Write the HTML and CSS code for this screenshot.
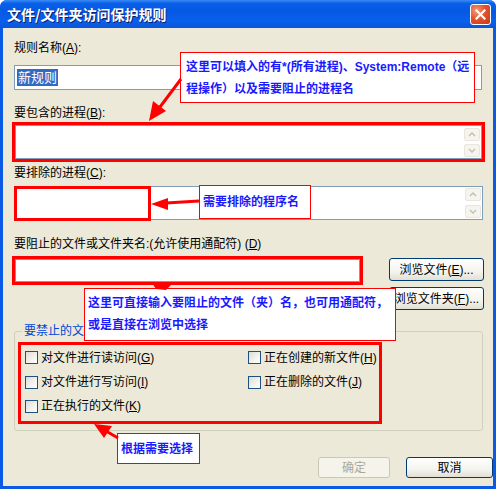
FILE: index.html
```html
<!DOCTYPE html>
<html lang="zh-CN">
<head>
<meta charset="utf-8">
<title>文件/文件夹访问保护规则</title>
<link rel="stylesheet" href="styles.css">
</head>
<body>
<div class="window">
  <div class="titlebar">
    <span class="title">文件/文件夹访问保护规则</span>
    <span class="close">
      <svg width="11" height="11" viewBox="0 0 11 11"><path d="M1.5 1.5 L9.5 9.5 M9.5 1.5 L1.5 9.5" stroke="#fff" stroke-width="2.2" stroke-linecap="square"/></svg>
    </span>
  </div>
  <div class="client">
    <div class="label">规则名称(<u>A</u>):</div>
    <div class="field input-a"><span class="sel">新规则</span></div>

    <div class="label lb">要包含的进程(<u>B</u>):</div>
    <div class="redbox rb-b">
      <div class="field ta-b">
        <div class="spin">
          <span class="sbtn"><svg width="8" height="5" viewBox="0 0 8 5"><path d="M1 4 L4 1 L7 4" fill="none" stroke="#c5c2b2" stroke-width="1.5"/></svg></span>
          <span class="sbtn"><svg width="8" height="5" viewBox="0 0 8 5"><path d="M1 1 L4 4 L7 1" fill="none" stroke="#c5c2b2" stroke-width="1.5"/></svg></span>
        </div>
      </div>
    </div>

    <div class="label lc">要排除的进程(<u>C</u>):</div>
    <div class="field ta-c">
      <div class="redmark"></div>
      <div class="spin spin-c">
        <span class="sbtn"><svg width="8" height="5" viewBox="0 0 8 5"><path d="M1 4 L4 1 L7 4" fill="none" stroke="#c5c2b2" stroke-width="1.5"/></svg></span>
        <span class="sbtn"><svg width="8" height="5" viewBox="0 0 8 5"><path d="M1 1 L4 4 L7 1" fill="none" stroke="#c5c2b2" stroke-width="1.5"/></svg></span>
      </div>
    </div>

    <div class="label ld">要阻止的文件或文件夹名:(允许使用通配符) (<u>D</u>)</div>
    <div class="row-d">
      <div class="redbox rb-d"><div class="field input-d"></div></div>
      <div class="browse">
        <span class="btn"><span>浏览文件(<u>E</u>)...</span></span>
        <span class="btn"><span>浏览文件夹(<u>F</u>)...</span></span>
      </div>
    </div>

    <fieldset class="group">
      <legend>要禁止的文件操作</legend>
      <div class="redbox rb-checks">
        <div class="checks">
          <div class="chk"><span class="box"></span><span>对文件进行读访问(<u>G</u>)</span></div>
          <div class="chk"><span class="box"></span><span>正在创建的新文件(<u>H</u>)</span></div>
          <div class="chk"><span class="box"></span><span>对文件进行写访问(<u>I</u>)</span></div>
          <div class="chk"><span class="box"></span><span>正在删除的文件(<u>J</u>)</span></div>
          <div class="chk"><span class="box"></span><span>正在执行的文件(<u>K</u>)</span></div>
        </div>
      </div>
    </fieldset>

    <div class="actions">
      <span class="btn btn-ok">确定</span>
      <span class="btn btn-cancel">取消</span>
    </div>
  </div>

  <div class="note note1">这里可以填入的有*(所有进程)、System:Remote（远<br>程操作）以及需要阻止的进程名</div>
  <div class="note note2">需要排除的程序名</div>
  <div class="note note3">这里可直接输入要阻止的文件（夹）名，也可用通配符，<br>或是直接在浏览中选择</div>
  <div class="note note4">根据需要选择</div>

  <svg class="arrows" width="496" height="489" viewBox="0 0 496 489">
    <g fill="#ff0000" stroke="#ff0000">
      <line x1="181" y1="79" x2="160" y2="107" stroke-width="3"/>
      <polygon points="149,121 153,101 166,111" stroke="none"/>
      <line x1="199" y1="201" x2="166" y2="203" stroke-width="3"/>
      <polygon points="151,204 168,198 168,210" stroke="none"/>
      <polygon points="152,283 171,285 166,290 156,289" stroke="none"/>
      <line x1="118" y1="438" x2="106" y2="431" stroke-width="3"/>
      <polygon points="94,424 112,426 104,438" stroke="none"/>
    </g>
  </svg>
</div>
</body>
</html>
```

FILE: styles.css
```css
* { box-sizing: border-box; }

html, body {
  margin: 0;
  padding: 0;
  background: #ffffff;
}

body {
  font-family: "Liberation Sans", "Noto Sans CJK SC", sans-serif;
  font-size: 12px;
  color: #000;
}

u { text-decoration: underline; text-underline-offset: 1px; }

.window {
  position: relative;
  width: 496px;
  height: 489px;
  background: #0a5ae6;
  border-radius: 7px 7px 0 0;
  overflow: hidden;
}

.titlebar {
  height: 28px;
  display: flex;
  align-items: center;
  justify-content: space-between;
  padding: 0 5px 0 7px;
  background: linear-gradient(to bottom, #3b8cf6 0%, #0a5fe8 12%, #0458e4 40%, #0a60ec 75%, #0b55d8 100%);
}

.title {
  color: #ffffff;
  font-family: "Noto Sans CJK SC", sans-serif;
  font-weight: bold;
  font-size: 14px;
  line-height: 16px;
  text-shadow: 1px 1px 0 #0a1e6e;
}

.close {
  width: 21px;
  height: 21px;
  border: 1px solid #ffffff;
  border-radius: 3px;
  background: radial-gradient(circle at 30% 30%, #f59a7c 0%, #e2532f 45%, #c23a18 100%);
  display: flex;
  align-items: center;
  justify-content: center;
}

.client {
  margin: 0 3px 3px 3px;
  height: 458px;
  background: #ece9d8;
  padding: 13px 0 0 11px;
}

.label {
  line-height: 14px;
  height: 14px;
  white-space: nowrap;
}

.lb { margin-top: 16px; }
.lc { margin-top: 4px; }
.ld { margin-top: 17px; }

.field {
  position: relative;
  background: #ffffff;
  border: 1px solid #7f9db9;
}

.input-a {
  margin-top: 10px;
  width: 468px;
  height: 25px;
  padding: 3px 0 0 2px;
}

.sel {
  display: inline-block;
  background: #316ac5;
  color: #ffffff;
  font-size: 13px;
  line-height: 17px;
  padding: 0 1px;
}

.redbox {
  border: 3px solid #ff0000;
}

.rb-b {
  margin: 2px 0 0 -2px;
  width: 473px;
  height: 40px;
}

.ta-b {
  width: 100%;
  height: 100%;
}

.spin {
  position: absolute;
  right: 1px;
  top: 2px;
  display: flex;
  flex-direction: column;
  gap: 3px;
}

.spin-c { top: 1px; gap: 4px; }

.sbtn {
  width: 16px;
  height: 13px;
  background: #f5f4ef;
  border: 1px solid #e9e7dd;
  border-radius: 2px;
  display: flex;
  align-items: center;
  justify-content: center;
}

.ta-c {
  margin-top: 6px;
  width: 469px;
  height: 34px;
}

.redmark {
  position: absolute;
  left: -1px;
  top: -1px;
  width: 137px;
  height: 35px;
  border: 3px solid #ff0000;
}

.row-d {
  margin-top: 5px;
  display: flex;
  align-items: flex-start;
}

.rb-d {
  margin-left: -2px;
  width: 351px;
  height: 29px;
}

.input-d {
  width: 100%;
  height: 100%;
}

.browse {
  margin: 2px 0 0 26px;
  display: flex;
  flex-direction: column;
  gap: 6px;
}

.btn {
  display: flex;
  align-items: center;
  justify-content: center;
  height: 23px;
  border: 1px solid #003c74;
  border-radius: 3px;
  background: linear-gradient(to bottom, #ffffff 0%, #f4f3ee 60%, #e2e0d4 100%);
  white-space: nowrap;
  line-height: 14px;
}

.browse .btn { width: 95px; }

.group {
  margin: 14px 0 0 0;
  width: 469px;
  padding: 0 0 6px 3px;
  border: 1px solid #d0d0bf;
  border-radius: 3px;
}

.group legend {
  color: #0046d5;
  line-height: 14px;
  padding: 0 2px;
  margin-left: 4px;
}

.rb-checks {
  margin-top: 4px;
  width: 364px;
  height: 82px;
  padding: 0 0 0 4px;
}

.checks {
  display: grid;
  grid-template-columns: 223px 1fr;
  grid-template-rows: 25px 24px 24px;
}

.chk {
  display: flex;
  align-items: center;
  gap: 3px;
  white-space: nowrap;
  line-height: 14px;
}

.box {
  width: 13px;
  height: 13px;
  border: 1px solid #1c5180;
  background: linear-gradient(135deg, #dcdbd5 0%, #f4f3ee 60%, #ffffff 100%);
  flex: none;
}

.actions {
  margin-top: 26px;
  width: 479px;
  display: flex;
  justify-content: flex-end;
  gap: 16px;
}

.actions .btn { height: 21px; }

.btn-ok {
  width: 72px;
  color: #aca899;
  border-color: #c9c7ba;
  background: #f5f4ea;
}

.btn-cancel { width: 87px; }

.note {
  position: absolute;
  background: #ffffff;
  border: 1px solid #ff0000;
  color: #1a1aff;
  font-family: "Liberation Sans", "Noto Sans CJK SC", sans-serif;
  font-weight: bold;
  font-size: 12px;
  line-height: 22px;
  white-space: nowrap;
}

.note1 { left: 180px; top: 52px; width: 295px; height: 51px; padding: 3px 0 0 5px; }
.note2 { left: 199px; top: 185px; width: 112px; height: 34px; padding: 5px 0 0 3px; }
.note3 { left: 84px; top: 288px; width: 312px; height: 53px; padding: 3px 0 0 3px; }
.note4 { left: 117px; top: 433px; width: 83px; height: 31px; padding: 4px 0 0 3px; }

.arrows {
  position: absolute;
  left: 0;
  top: 0;
  pointer-events: none;
}
```
